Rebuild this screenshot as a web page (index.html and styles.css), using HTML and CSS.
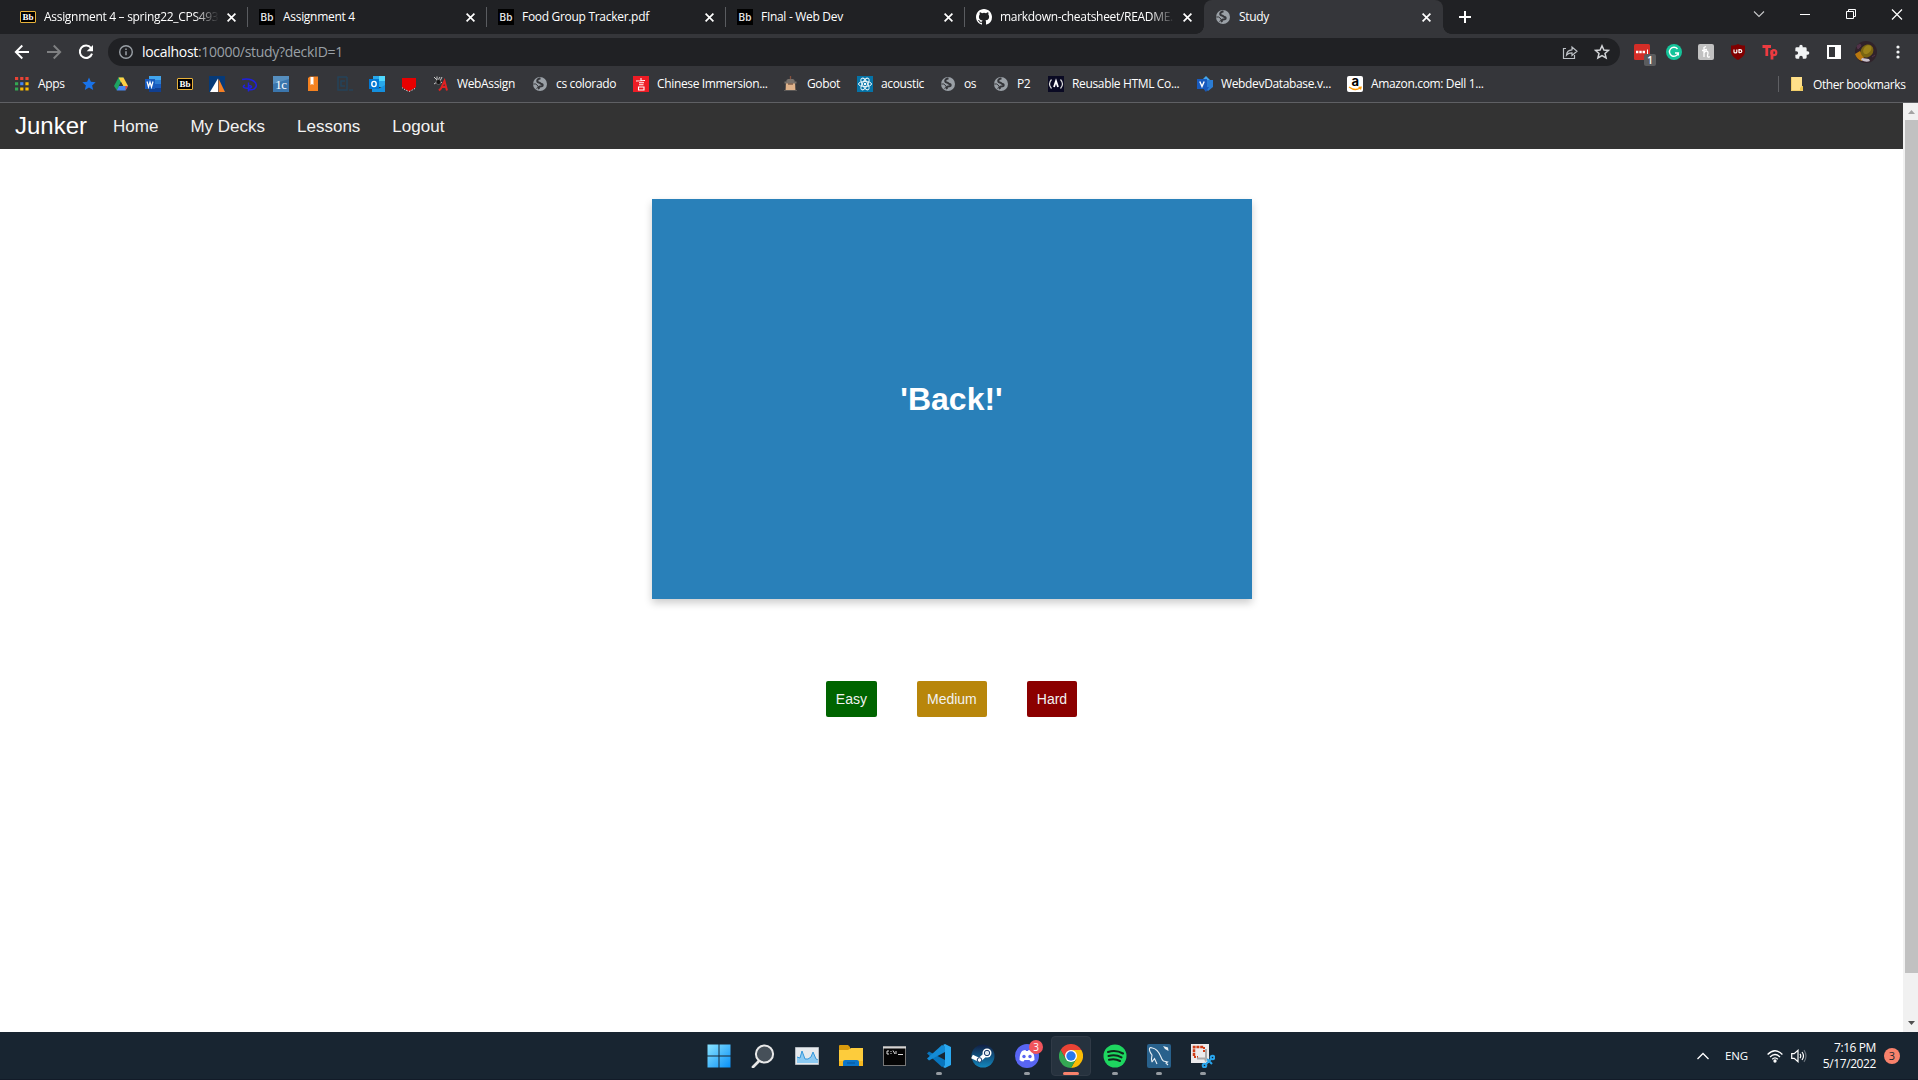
FILE: index.html
```html
<!DOCTYPE html>
<html lang="en">
<head>
<meta charset="utf-8">
<title>Study</title>
<link rel="stylesheet" href="styles.css">
</head>
<body>
<svg class="defs" width="0" height="0">
  <symbol id="close" viewBox="0 0 8 8"><path d="M.5.5l7 7M7.5.5l-7 7" stroke="#fff" stroke-width="1.5"/></symbol>
  <symbol id="globe" viewBox="0 0 16 16"><circle cx="8" cy="8" r="7" fill="#9aa0a6"/><path d="M8.500 2.300Q5 3.200 5.200 5.200C5.400 7 7.500 6 8.300 7.300c.6 1 2.200.2 2.400 1.500.2 1.500-1.200 1.700-2.700 1.800-1.400.1-1.500 1.200-1 2.600" fill="none" stroke="#35363a" stroke-width="2"/><path d="M1.200 8h2.600l2.400 2.200-.6 1.600-1.200.6" fill="none" stroke="#35363a" stroke-width="1"/></symbol>
</svg>

<header class="tabs">
  <div class="tab"><span class="bbgold">Bb</span><span class="title fade">Assignment 4 – spring22_CPS493</span><svg class="x"><use href="#close"/></svg></div>
  <div class="tab"><span class="bb">Bb</span><span class="title">Assignment 4</span><svg class="x"><use href="#close"/></svg></div>
  <div class="tab"><span class="bb">Bb</span><span class="title">Food Group Tracker.pdf</span><svg class="x"><use href="#close"/></svg></div>
  <div class="tab"><span class="bb">Bb</span><span class="title">FInal - Web Dev</span><svg class="x"><use href="#close"/></svg></div>
  <div class="tab last"><svg class="i16" viewBox="0 0 16 16"><path fill="#fff" d="M8 0C3.580 0 0 3.580 0 8c0 3.540 2.290 6.530 5.470 7.590.4.070.55-.17.55-.38 0-.19-.01-.82-.01-1.490-2.010.37-2.530-.49-2.690-.94-.09-.23-.48-.94-.82-1.130-.28-.15-.68-.52-.01-.53.63-.01 1.080.58 1.230.82.72 1.210 1.870.87 2.330.66.070-.52.28-.87.51-1.070-1.780-.2-3.640-.89-3.640-3.950 0-.87.31-1.590.82-2.150-.08-.2-.36-1.020.08-2.120 0 0 .67-.21 2.200.82a7.600 7.600 0 014 0c1.530-1.040 2.200-.82 2.200-.82.44 1.100.16 1.920.08 2.120.51.56.82 1.270.82 2.150 0 3.070-1.870 3.750-3.650 3.950.29.25.54.73.54 1.480 0 1.070-.01 1.930-.01 2.200 0 .21.15.46.55.38A8 8 0 0016 8c0-4.420-3.580-8-8-8z"/></svg><span class="title fade">markdown-cheatsheet/README.m</span><svg class="x"><use href="#close"/></svg></div>
  <div class="tab active"><svg class="i16"><use href="#globe"/></svg><span class="title">Study</span><svg class="x"><use href="#close"/></svg></div>
  <svg class="plus" viewBox="0 0 12 12"><path d="M6 0v12M0 6h12" stroke="#fff" stroke-width="2"/></svg>
  <div class="window">
    <svg width="46" height="28" viewBox="0 0 46 28" fill="none" stroke="#c8c9ca" stroke-width="1.100"><path d="M18 11.500l5 5 5-5"/></svg>
    <svg width="46" height="28" viewBox="0 0 46 28"><path d="M18 14.500h10" stroke="#fff"/></svg>
    <svg width="46" height="28" viewBox="0 0 46 28" fill="none" stroke="#fff"><path d="M18.500 11.500h7v7h-7zM20.500 11V9.500h7v7H26"/></svg>
    <svg width="46" height="28" viewBox="0 0 46 28"><path d="M18 9.500l10 10M28 9.500l-10 10" stroke="#fff" stroke-width="1.200"/></svg>
  </div>
</header>

<div class="toolbar">
  <div class="navbtns">
    <svg viewBox="0 0 16 16" fill="none" stroke="#fff" stroke-width="1.900"><path d="M15 8H2M8.300 1.500L1.800 8l6.500 6.500"/></svg>
    <svg viewBox="0 0 16 16" fill="none" stroke="#7f8082" stroke-width="1.900"><path d="M1 8h13M7.700 1.500L14.200 8l-6.500 6.500"/></svg>
    <svg viewBox="0 0 16 16"><path d="M13 4A6.200 6.200 0 1014 9.600" fill="none" stroke="#fff" stroke-width="2"/><path d="M15 1v6.300H8.700z" fill="#fff"/></svg>
  </div>
  <div class="omnibox">
    <svg class="i16" viewBox="0 0 16 16"><circle cx="8" cy="8" r="6.300" fill="none" stroke="#9aa0a6" stroke-width="1.400"/><path d="M8 7.300v4M8 4.500v1.500" stroke="#9aa0a6" stroke-width="1.500"/></svg>
    <span class="url"><b>localhost</b>:10000/study?deckID=1</span>
    <div class="urlicons">
      <svg class="i16" viewBox="0 0 16 16" fill="none" stroke="#bdc1c6" stroke-width="1.200"><path d="M4 4.500H1.500v10h11V11"/><path d="M4.500 11c.3-3.500 2.300-5 5.500-5.200V3l5 4.300-5 4.200V8.800c-2.500 0-4.200.6-5.500 2.200z"/></svg>
      <svg class="i16" viewBox="0 0 16 16"><path d="M8 1.800l1.900 4.200 4.600.4-3.500 3 1.100 4.500L8 11.500l-4.100 2.400L5 9.400l-3.500-3 4.600-.4z" fill="none" stroke="#d3d5d8" stroke-width="1.500"/></svg>
    </div>
  </div>
  <div class="exts">
    <div class="ext"><svg class="i16" viewBox="0 0 16 16"><rect width="16" height="16" rx="1.500" fill="#d32d27"/><path d="M2 8h9" stroke="#fff" stroke-width="2.400" stroke-dasharray="2.400 .9"/><path d="M13.500 5.500v5" stroke="#fff"/></svg><span class="count">1</span></div>
    <div class="ext"><svg class="i16" viewBox="0 0 16 16"><circle cx="8" cy="8" r="8" fill="#15c39a"/><path d="M11.500 5A4.500 4.500 0 1012.300 9H9M12.300 8.500v3" fill="none" stroke="#fff" stroke-width="1.400"/></svg></div>
    <div class="ext"><svg class="i16" viewBox="0 0 16 16"><rect width="16" height="16" rx="2" fill="#c1c1c1"/><path d="M6 13V3.500l2-1M4 6.500l5-1M6 9c1-2 4-3 4 0 0 1.500-1 2.500-.3 3.800.5.500 1.300.2 2-.4" fill="none" stroke="#fff" stroke-width="1.300"/></svg></div>
    <div class="ext"><svg class="i16" viewBox="0 0 16 16"><path d="M8 0c2 1.300 4.500 1.500 7 1.500V7c0 4.500-3 6.800-7 9-4-2.200-7-4.500-7-9V1.500C3.500 1.500 6 1.300 8 0z" fill="#800000"/><path d="M4 5.500V8c0 1.200 2.800 1.200 2.800 0V5.500M9 9V5.700h1c2.400 0 2.400 3 0 3H9" fill="none" stroke="#fff" stroke-width="1.200"/></svg></div>
    <div class="ext"><svg class="i16" viewBox="0 0 16 16"><path d="M.5 2.500h8.500M4.800 2.500v9.500M10 6v9.500" stroke="#ed3b40" stroke-width="2.800" fill="none"/><circle cx="11.800" cy="8.700" r="2.500" fill="none" stroke="#ed3b40" stroke-width="2.200"/></svg></div>
    <div class="ext"><svg class="i16" viewBox="0 0 24 24"><path fill="#f1f3f4" d="M20.500 11H19V7a2 2 0 00-2-2h-4V3.500a2.500 2.500 0 00-5 0V5H4a2 2 0 00-2 2v3.800h1.500a2.700 2.700 0 010 5.400H2V20a2 2 0 002 2h3.800v-1.500a2.700 2.700 0 015.400 0V22H17a2 2 0 002-2v-4h1.500a2.500 2.500 0 000-5z"/></svg></div>
    <div class="ext"><svg class="i16" viewBox="0 0 16 16"><path d="M1 1h14v14H1zM3 3v10h6V3z" fill="#fff" fill-rule="evenodd"/></svg></div>
    <div class="ext"><svg width="22" height="22" viewBox="0 0 22 22"><circle cx="11" cy="11" r="11" fill="#30222a"/><path d="M0 13l5-3 4 6-2 4C3 19 1 16 0 13z" fill="#b9780f"/><ellipse cx="12" cy="10" rx="7" ry="6" transform="rotate(-50 12 10)" fill="#7a6512"/><ellipse cx="12.500" cy="9" rx="5" ry="3.500" transform="rotate(-50 12 9)" fill="#9b821a"/><path d="M6 19q5 3 9 1l-1-2-7-1z" fill="#c9c1cc"/><path d="M2 5l3-2 1 2-3 3zM17 16l3-2" fill="#52334a" stroke="#52334a"/></svg></div>
    <div class="ext"><svg class="i16" viewBox="0 0 16 16" fill="#f1f3f4"><circle cx="8" cy="3" r="1.600"/><circle cx="8" cy="8" r="1.600"/><circle cx="8" cy="13" r="1.600"/></svg></div>
  </div>
</div>

<div class="bookmarks">
  <div class="marks">
    <a class="bm"><svg class="i16" viewBox="0 0 16 16"><path d="M1 2.500h14" stroke="#ea4335" stroke-width="3" stroke-dasharray="3.200 2"/><path d="M1 7.700h3.200M1 12.900h3.200" stroke="#34a853" stroke-width="3"/><path d="M6.200 7.700h3.200" stroke="#4285f4" stroke-width="3"/><path d="M11.400 7.700h3.200M6.200 12.900h8.400" stroke="#fbbc04" stroke-width="3" stroke-dasharray="3.200 2"/></svg>Apps</a>
    <a class="bm"><svg class="i16" viewBox="0 0 16 16"><path fill="#1a73e8" d="M8 1.500l1.900 4.300 4.800.4-3.600 3.200L12.200 14 8 11.500 3.800 14l1.100-4.600L1.300 6.200l4.800-.4z"/></svg></a>
    <a class="bm"><svg class="i16" viewBox="0 0 16 16"><path d="M5.500 1.500h5L8 6 4 14.500 1 10z" fill="#1da462"/><path d="M5.500 1.500h5L15 10H10z" fill="#ffcf45"/><path d="M3.700 14.500L6 10h9l-2.500 4.500z" fill="#4688f4"/><path d="M12.400 10H15l-2.500 4.500z" fill="#ea4335"/><path d="M8 6l2.300 4H5.800z" fill="#35363a"/></svg></a>
    <a class="bm"><svg class="i16" viewBox="0 0 16 16"><path d="M4 0h12v4H4z" fill="#41a5ee"/><path d="M4 4h12v4H4z" fill="#2b7cd3"/><path d="M4 8h12v4H4z" fill="#185abd"/><path d="M4 12h12v4H4z" fill="#103f91"/><rect y="3" width="10" height="10" fill="#185abd"/><path d="M2 5.500L3.500 11 5 6l1.500 5L8 5.500" fill="none" stroke="#fff" stroke-width="1.200"/></svg></a>
    <a class="bm"><span class="bbgold">Bb</span></a>
    <a class="bm"><svg class="i16" viewBox="0 0 16 16"><path fill="#063a78" d="M0 0h16v16H0z"/><path d="M9 2.500L1 16h8z" fill="#fff"/><path d="M9.500 2.500L16 16H9.500z" fill="#f58025"/></svg></a>
    <a class="bm"><svg class="i16" viewBox="0 0 16 16" fill="none" stroke="#2020e0" stroke-width="1.500"><path d="M1 3.500C8 1.500 15 5 15.300 9c.2 4-4.300 5.500-7.300 4.500M7.500 6.500v9M4 9c-4 2 0 4 5 3 3-1 1-3-2-2.500"/></svg></a>
    <a class="bm"><svg class="i16" viewBox="0 0 16 16"><path fill="#3b76ad" d="M0 0h16v16H0z"/><path fill="#72a8d1" d="M0 0h16v3L0 8z" opacity=".5"/><text x="8" y="13" text-anchor="middle" class="serif" font-size="13" fill="#fff">1c</text></svg></a>
    <a class="bm"><svg class="i16" viewBox="0 0 16 16"><path d="M3 2l2-1.500h8V15H3z" fill="#f58220"/><path d="M5.500 1h3v8L7 8 5.500 9z" fill="#fff"/></svg></a>
    <a class="bm"><svg class="i16" viewBox="0 0 16 16" fill="none" stroke="#24435a" stroke-width="1.500"><path d="M10 1H1v13h9V1M8 5H4v5h4M12 14h4"/></svg></a>
    <a class="bm"><svg class="i16" viewBox="0 0 16 16"><path d="M4 0h12v11H4z" fill="#28a8ea"/><path d="M10 0h6v5h-6z" fill="#50d9ff"/><path d="M4 5h6v5H4z" fill="#0364b8"/><path d="M3 16V9l6 4 7-4v7z" fill="#1490df"/><rect y="3" width="10" height="10" fill="#0078d4"/><ellipse cx="5" cy="8" rx="2.200" ry="2.600" fill="none" stroke="#fff" stroke-width="1.400"/></svg></a>
    <a class="bm"><svg class="i16" viewBox="0 0 16 16"><path d="M1 2h14v9q-1 1-3 2l-4 2.500L4 13q-2-1-3-2z" fill="#e80000"/><path d="M1 11.500q2 2 7 4 5-2 7-4" fill="none" stroke="#fff" stroke-dasharray="1.200 1.500"/></svg></a>
    <a class="bm"><svg class="i16" viewBox="0 0 16 16"><path d="M1 1l3 3M4 .5v3M7 1L5 4M9 1L7 5M3 6.500h6M1 8l3-2" stroke="#c9c9c9" stroke-width="1"/><circle cx="5.500" cy="6" r="2.500" fill="#151515" stroke="#999" stroke-width=".5"/><path d="M6 14.500l2-2L11.500 5l2.500 9.500M8.500 11h4" fill="none" stroke="#e12222" stroke-width="2"/></svg>WebAssign</a>
    <a class="bm"><svg class="i16"><use href="#globe"/></svg>cs colorado</a>
    <a class="bm"><svg class="i16" viewBox="0 0 16 16"><path fill="#ee1c25" d="M0 0h16v16H0z"/><path d="M8 2v2.500M3 5l9-.5M6 6.800h5M6 8.800h4.500M5.500 11h5.500v3H5.500z" fill="none" stroke="#fff" stroke-width="1.100"/></svg>Chinese Immersion...</a>
    <a class="bm"><svg class="i16" viewBox="0 0 16 16"><path d="M7.500 0v5" stroke="#87513d" stroke-width="1.300"/><path d="M3 6h9l.5 9h-10z" fill="#dfb28a"/><path d="M3.500 4l1.500-1h5l1.500 1v1.500h2v2h-12v-2h2z" fill="#77706a"/><path d="M5 8h5" stroke="#664a3c" stroke-width="1.200"/><path d="M1 14.500h13" stroke="#5d5a58"/></svg>Gobot</a>
    <a class="bm"><svg class="i16" viewBox="0 0 16 16"><path fill="#0573a7" d="M0 0h16v16H0z"/><g fill="none" stroke="#e8f5fa"><ellipse cx="8" cy="8" rx="6.500" ry="2.600"/><ellipse cx="8" cy="8" rx="6.500" ry="2.600" transform="rotate(60 8 8)"/><ellipse cx="8" cy="8" rx="6.500" ry="2.600" transform="rotate(120 8 8)"/></g><circle cx="8" cy="8" r="1.200" fill="#fff"/></svg>acoustic</a>
    <a class="bm"><svg class="i16"><use href="#globe"/></svg>os</a>
    <a class="bm"><svg class="i16"><use href="#globe"/></svg>P2</a>
    <a class="bm"><svg class="i16" viewBox="0 0 16 16"><path fill="#0a0a23" d="M0 0h16v16H0z"/><path d="M3.500 3.500Q-.5 8 3.500 12.500M12.500 3.500q4 4.500 0 9" fill="none" stroke="#ddd" stroke-width="1.200"/><path d="M6 11l2-6 2 6" fill="none" stroke="#fff" stroke-width="1.800"/></svg>Reusable HTML Co...</a>
    <a class="bm"><svg class="i16" viewBox="0 0 16 16"><path d="M9 0l5 5-5 5-5-5z" fill="#41a5ee"/><path d="M10 4h6v7l-5 4-5-4z" fill="#2b7cd3"/><path d="M5 11h7l-3 5z" fill="#185abd"/><rect y="3" width="10" height="10" fill="#185abd"/><path d="M2.800 5.500L5 10.500l2.200-5" fill="none" stroke="#fff" stroke-width="1.400"/></svg>WebdevDatabase.v...</a>
    <a class="bm"><svg class="i16" viewBox="0 0 16 16"><rect width="16" height="16" rx="2" fill="#fff"/><text x="8" y="10" text-anchor="middle" font-size="13" font-weight="700" class="inter" fill="#000">a</text><path d="M2 11q6 4.500 11 1M11.500 11.500l2.500-.3-.6 2.300" fill="none" stroke="#f90" stroke-width="1.400"/></svg>Amazon.com: Dell 1...</a>
  </div>
  <a class="other"><svg width="12" height="14" viewBox="0 0 12 14"><path d="M0 0h11v9h1v5H0z" fill="#ffe08a"/><path d="M9 14v-3l2-2h1v5z" fill="#f2c94c"/><path d="M.5 0v13.500H12" fill="none" stroke="#f0cd69"/></svg>Other bookmarks</a>
</div>

<main class="viewport">
  <div class="page">
    <nav class="topnav"><span class="brand">Junker</span><a>Home</a><a>My Decks</a><a>Lessons</a><a>Logout</a></nav>
    <div class="card"><h1>'Back!'</h1></div>
    <div class="actions"><button class="easy">Easy</button><button class="medium">Medium</button><button class="hard">Hard</button></div>
  </div>
  <div class="scroll">
    <svg width="15" height="17" viewBox="0 0 15 17"><path d="M5 11h7L8.500 7z" fill="#a3a3a3"/></svg>
    <div class="thumb"></div>
    <svg width="15" height="17" viewBox="0 0 15 17"><path d="M5 6h7l-3.500 4z" fill="#505050"/></svg>
  </div>
</main>

<footer class="taskbar">
  <div class="apps">
    <div class="app"><svg viewBox="0 0 24 24"><defs><linearGradient id="win" x2="1" y2="1"><stop stop-color="#8be4ff"/><stop offset="1" stop-color="#0890f8"/></linearGradient></defs><path d="M.5.500h11v11H.5zM12.500.500h11v11h-11zM.5 12.500h11v11H.5zM12.500 12.500h11v11h-11z" fill="url(#win)"/></svg></div>
    <div class="app"><svg viewBox="0 0 24 24"><path d="M8 17l-6 6" stroke="#e6e6e6" stroke-width="2.800" stroke-linecap="round"/><circle cx="13.500" cy="10" r="8.600" fill="#465059" stroke="#e9e9e9" stroke-width="2"/></svg></div>
    <div class="app"><svg viewBox="0 0 24 24"><path fill="#e6eaed" stroke="#b4bac0" d="M.5 3.500h23v17H.5z"/><path d="M2 19v-6l3 1 2-7 3 8 3 0 3-2 2-5 3 7 2 2v2z" fill="#8ccaf2"/><path d="M2 13l3 1 2-7 3 8h3l3-2 2-5 3 7 2 1" fill="none" stroke="#3498db"/></svg></div>
    <div class="app"><svg viewBox="0 0 24 24"><path d="M0 2q0-1 1-1h8l2 2v4H0z" fill="#d99a0c"/><path d="M0 6h9l3-2h12v18H0z" fill="#fdcc3c"/><path d="M0 17h24v5H0z" fill="#f7b91f"/><path d="M4 22v-4q0-2 2-2h12q2 0 2 2v4z" fill="#0c75c8"/><path d="M8 19h8" stroke="#075497"/></svg></div>
    <div class="app"><svg viewBox="0 0 24 24"><rect x=".5" y="2.500" width="22" height="19" fill="#050505" stroke="#777"/><path d="M0 3.500h23" stroke="#d4d4d4" stroke-width="2"/><path d="M6 7H4v3h2M8 7v1M8 9v1M10 6.500l2 3.500M13 7v3M15 10.500h5" fill="none" stroke="#ddd"/></svg></div>
    <div class="app run"><svg viewBox="0 0 24 24"><path d="M2 7.500L0 9.500l15 13.500 3-1.500V16z" fill="#0875bd"/><path d="M2 16.500L0 14.500 15 1l3 1.500V8z" fill="#148bd5"/><path d="M18 0l6 3v18l-6 3-2-1 2-2V3l-2-2z" fill="#2aa9f1"/></svg></div>
    <div class="app"><svg viewBox="0 0 24 24"><defs><linearGradient id="steam" x2="0" y2="1"><stop stop-color="#111e42"/><stop offset="1" stop-color="#1387bd"/></linearGradient></defs><circle cx="12" cy="12" r="11.500" fill="url(#steam)"/><path d="M1 12.500l7.500 3.500L15 10" fill="none" stroke="#fff" stroke-width="4"/><circle cx="16" cy="9" r="4.500" fill="#fff"/><circle cx="16" cy="9" r="2.700" fill="#dfe8ee" stroke="#16396a"/><circle cx="8.500" cy="16" r="2.300" fill="#fff" stroke="#16396a"/></svg></div>
    <div class="app run"><svg viewBox="0 0 24 24"><circle cx="12" cy="12" r="12" fill="#5865f2"/><path d="M4.500 16q0-6 2.500-9 2-1 3.500-1l.5 1h2l.5-1Q15 6 17 7q2.500 3 2.500 9-2 1.500-4 1.500L14.500 16h-5l-1 1.500q-2 0-4-1.500z" fill="#fff"/><circle cx="9" cy="12.500" r="1.700" fill="#5865f2"/><circle cx="15" cy="12.500" r="1.700" fill="#5865f2"/></svg><span class="badge">3</span></div>
    <div class="app run current"><svg viewBox="0 0 24 24"><path d="M1.600 6A12 12 0 0122.400 6H12L6.800 15z" fill="#ea4335"/><path d="M22.400 6A12 12 0 0112 24l5.200-9L12 6z" fill="#fbbc04"/><path d="M12 24A12 12 0 011.600 6l5.200 9h10.400z" fill="#34a853"/><circle cx="12" cy="12" r="6" fill="#fff"/><circle cx="12" cy="12" r="4.700" fill="#2878ec"/></svg></div>
    <div class="app run"><svg viewBox="0 0 24 24"><circle cx="12" cy="12" r="11.500" fill="#1ed760"/><path d="M5 8q8-2.500 15 1.500M5.500 12q7-2 13 1.300M6 15.800q6-1.500 11 1.200" fill="none" stroke="#10291b" stroke-width="2.100" stroke-linecap="round"/></svg></div>
    <div class="app run"><svg viewBox="0 0 24 24"><rect width="24" height="24" rx="2" fill="#28618c"/><path d="M5 18Q4 15 5 11 2 7 2.500 4.500 3 3 5.500 4q5 1 8 8 1.500 4 3 5l4 1-1.500 1 2 2M5 18l2.500-3.500L10 20" fill="none" stroke="#e8eff4" stroke-width="1.100"/><path d="M16 2l5 1.500.5 3.500-3.500-2z" fill="#e8eff4"/></svg></div>
    <div class="app run"><svg viewBox="0 0 24 24"><path d="M0 0h18v19H0z" fill="#ecebec"/><path d="M3 12V3h10" fill="none" stroke="#cf3d17" stroke-width="2.500" stroke-dasharray="3 .8"/><path d="M3 13h4M13 3v5" stroke="#cf3d17" stroke-width="2" stroke-dasharray="2 1"/><path d="M15 5v10M6 14.500h8l1 3" fill="none" stroke="#aaa" stroke-width="2"/><g fill="none" stroke="#28a4eb" stroke-width="2"><circle cx="21.500" cy="13.500" r="1.800"/><circle cx="13.500" cy="21.500" r="1.800"/><path d="M15 20l5-5M16 15l5 5"/></g></svg></div>
  </div>
  <div class="tray">
    <svg class="up" width="12" height="8" viewBox="0 0 12 8"><path d="M.5 7L6 1.500 11.500 7" fill="none" stroke="#fff" stroke-width="1.300"/></svg>
    <span class="lang">ENG</span>
    <svg class="wifi" width="16" height="14" viewBox="0 0 16 14" fill="none" stroke="#fff" stroke-width="1.300"><path d="M.6 5.500q7.400-7.500 14.800 0M3 8q5-5 10 0M5.200 10.300q2.800-2.800 5.600 0"/><circle cx="8" cy="12" r="1" fill="#fff"/></svg>
    <svg class="vol" width="16" height="14" viewBox="0 0 16 14" fill="none" stroke="#fff" stroke-width="1.200"><path d="M.7 4.700h2.500L7 1.300v11.400L3.200 9.300H.7zM9 4.800q1.500 2.200 0 4.400M11 3q3 4 0 8"/><path d="M13 1.200q4 5.800 0 11.600" stroke="#68717a"/></svg>
    <div class="clock"><span>7:16 PM</span><span>5/17/2022</span></div>
    <span class="notify">3</span>
  </div>
</footer>
</body>
</html>
```
FILE: styles.css
```css
* { box-sizing: border-box; }
html, body { height: 100%; }
body {
  margin: 0;
  display: flex;
  flex-direction: column;
  overflow: hidden;
  background: #fff;
  color: #fff;
  font: 12px "Open Sans", "Noto Sans", sans-serif;
}
svg { display: block; flex: none; }
.defs { position: absolute; }
.i16 { width: 16px; height: 16px; }
.serif { font-family: "Liberation Serif", serif; }
.inter { font-family: Inter, sans-serif; }
.bb, .bbgold { flex: none; width: 16px; text-align: center; background: #000; letter-spacing: 0; }
.bb { height: 16px; font: 600 10px/16px Inter, sans-serif; color: #ddd; }
.bbgold { height: 12px; border: 1px solid #e8b23a; border-radius: 1px; font: 700 9px/10px "Liberation Serif", serif; }

/* tab strip */
.tabs { display: flex; height: 34px; padding-left: 9px; background: #202124; }
.tab { position: relative; display: flex; align-items: center; width: 239px; padding: 0 12px 0 11px; }
.tab:not(.active):not(.last)::after { content: ""; position: absolute; right: 0; top: 7px; width: 1px; height: 20px; background: #5a5c60; }
.title { width: 175px; margin-left: 8px; letter-spacing: -0.3px; white-space: nowrap; overflow: hidden; line-height: 20px; }
.fade { -webkit-mask-image: linear-gradient(90deg, #000 150px, transparent 175px); mask-image: linear-gradient(90deg, #000 150px, transparent 175px); }
.x { width: 9px; height: 9px; margin-left: 9px; }
.active { background: #35363a; border-radius: 8px 8px 0 0; }
.active::before, .active::after { content: ""; position: absolute; bottom: 0; width: 8px; height: 8px; }
.active::before { left: -8px; background: radial-gradient(circle at 0 0, transparent 7.5px, #35363a 8px); }
.active::after { right: -8px; background: radial-gradient(circle at 100% 0, transparent 7.5px, #35363a 8px); }
.plus { width: 12px; height: 12px; margin: 11px 0 0 16px; }
.window { display: flex; margin-left: auto; margin-right: -2px; }

/* toolbar */
.toolbar { display: flex; height: 33px; padding-top: 4px; background: #35363a; }
.navbtns { display: flex; gap: 16px; width: 108px; height: 28px; padding-left: 14px; align-items: center; }
.navbtns svg { width: 16px; height: 16px; }
.omnibox { display: flex; align-items: center; width: 1512px; height: 28px; padding: 0 10px; border-radius: 14px; background: #202124; }
.url { margin-left: 8px; padding-bottom: 1px; font-size: 14px; letter-spacing: -0.3px; color: #9aa0a6; }
.url b { font-weight: 400; color: #fff; }
.urlicons { display: flex; gap: 16px; margin-left: auto; }
.exts { display: flex; padding-left: 6px; height: 28px; }
.ext { position: relative; display: flex; justify-content: center; align-items: center; width: 32px; }
.count { position: absolute; left: 18px; top: 16px; width: 12px; height: 12px; border-radius: 2px; background: #5b5c5e; font: 600 10px/12px "Open Sans", sans-serif; text-align: center; }

/* bookmarks bar */
.bookmarks { display: flex; justify-content: space-between; height: 36px; padding-left: 14px; background: #35363a; border-bottom: 1px solid #5f6064; }
.marks { display: grid; grid-template-columns: 67px repeat(11, 32px) 99px 101px 150px 74px 83px 53px 55px 149px 150px 150px; }
.bm { display: flex; align-items: center; gap: 8px; height: 33px; letter-spacing: -0.35px; white-space: nowrap; }
.other { display: flex; align-items: center; gap: 10px; width: 140px; height: 16px; margin-top: 9px; padding-left: 12px; border-left: 1px solid #5f6064; letter-spacing: -0.4px; white-space: nowrap; }

/* page */
.viewport { display: flex; height: 929px; }
.page { flex: 1; display: flex; flex-direction: column; align-items: center; font-family: "Liberation Sans", Arial, sans-serif; }
.topnav { display: flex; align-items: center; align-self: stretch; height: 46px; padding-left: 15px; background: #333; color: #f2f2f2; font-size: 17px; }
.brand { margin-right: 10px; font-size: 24px; color: #fff; }
.topnav a { padding: 2px 16px 0; }
.card { display: flex; align-items: center; justify-content: center; width: 600px; height: 400px; margin-top: 50px; background: #2980b9; box-shadow: 0 4px 8px rgba(0, 0, 0, .2); }
.card h1 { margin: 0; font-size: 32px; }
.actions { display: flex; gap: 40px; margin-top: 82px; }
.actions button { padding: 10px; border: 0; border-radius: 2px; color: #f2f2f2; font: 14px/16px "Liberation Sans", Arial, sans-serif; }
.easy { background: #006400; }
.medium { background: #b8860b; }
.hard { background: #8b0000; }
.scroll { display: flex; flex-direction: column; width: 15px; background: #f1f1f1; }
.thumb { height: 853px; margin-left: 2px; background: #c1c1c1; }
.scroll svg:last-child { margin-top: auto; }

/* taskbar */
.taskbar { display: flex; justify-content: space-between; height: 48px; padding-left: 697px; background: #182531; border-bottom: 1px solid #121b28; }
.apps { display: flex; padding-top: 4px; }
.app { position: relative; display: flex; align-items: center; justify-content: center; width: 40px; height: 40px; margin: 0 2px; border-radius: 4px; }
.app svg { width: 24px; height: 24px; }
.run::after { content: ""; position: absolute; left: 17px; bottom: 1px; width: 6px; height: 3px; border-radius: 2px; background: #959ba1; }
.current { background: #26323e; border: 1px solid #303a46; }
.current::after { left: 11px; bottom: 0; width: 16px; background: #f9826c; }
.badge { position: absolute; right: 4px; top: 4px; width: 14px; height: 14px; border-radius: 7px; background: #f0545c; font-size: 10px; line-height: 14px; text-align: center; }
.tray { display: flex; align-items: center; padding-right: 18px; }
.lang { margin-left: 16px; width: 24px; font-size: 11.5px; letter-spacing: -0.2px; }
.wifi { margin-left: 18px; }
.vol { margin-left: 8px; }
.clock { display: flex; flex-direction: column; width: 69px; margin-right: 8px; align-items: flex-end; line-height: 16px; letter-spacing: -0.4px; }
.notify { width: 16px; height: 16px; border-radius: 8px; background: #f9826c; color: #182531; font-size: 11px; line-height: 16px; text-align: center; }
```
